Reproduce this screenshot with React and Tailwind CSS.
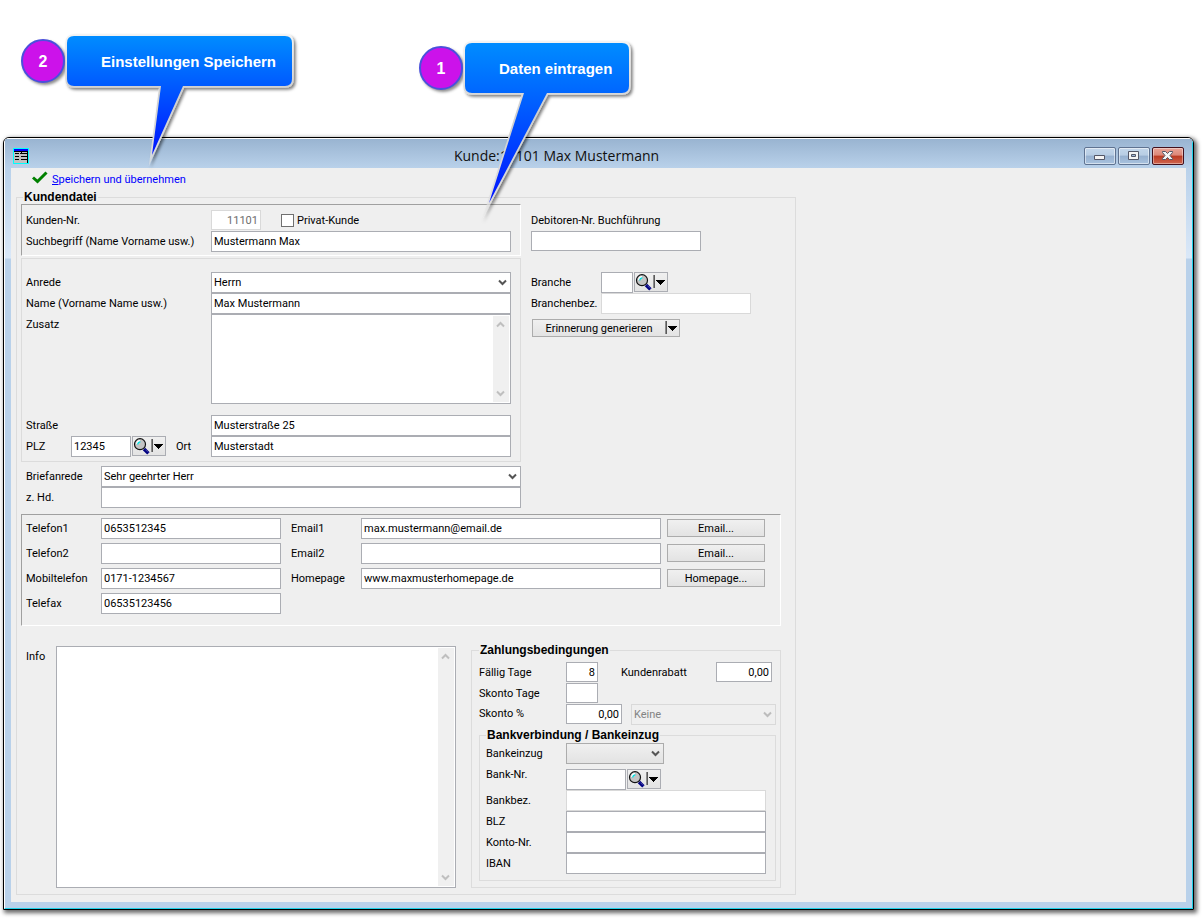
import { useState } from 'react'

const initialCustomer = {
  kundenNr: '11101',
  suchbegriff: 'Mustermann Max',
  debitorenNr: '',
  anrede: 'Herrn',
  name: 'Max Mustermann',
  zusatz: '',
  strasse: 'Musterstraße 25',
  plz: '12345',
  ort: 'Musterstadt',
  branche: '',
  branchenbez: '',
  briefanrede: 'Sehr geehrter Herr',
  zHd: '',
  telefon1: '0653512345',
  telefon2: '',
  mobil: '0171-1234567',
  telefax: '06535123456',
  email1: 'max.mustermann@email.de',
  email2: '',
  homepage: 'www.maxmusterhomepage.de',
  info: '',
  faelligTage: '8',
  kundenrabatt: '0,00',
  skontoTage: '',
  skontoProzent: '0,00',
  skontoArt: 'Keine',
  bankeinzug: '',
  bankNr: '',
  bankbez: '',
  blz: '',
  kontoNr: '',
  iban: '',
}

const callouts = [
  {
    number: '2',
    text: 'Einstellungen Speichern',
    box: 'left-[21px] top-[36px] w-[274px]',
    width: 225,
    tail: { left: 94, right: 116, tipX: 85, tipY: 119 },
  },
  {
    number: '1',
    text: 'Daten eintragen',
    box: 'left-[419px] top-[43px] w-[213px]',
    width: 164,
    tail: { left: 59, right: 82, tipX: 24, tipY: 160 },
  },
]

function Callout({ number, text, box, width, tail }) {
  const id = `callout-${number}`
  const outline = `M7 0 H${width - 7} Q${width} 0 ${width} 7 V43 Q${width} 50 ${width - 7} 50 H${tail.right} L${tail.tipX} ${tail.tipY} L${tail.left} 50 H7 Q0 50 0 43 V7 Q0 0 7 0 Z`

  return (
    <div className={`pointer-events-none absolute z-10 flex font-['Liberation_Sans',Arial,sans-serif] ${box}`}>
      <div className="mt-[3px] flex size-11 shrink-0 items-center justify-center rounded-full border-2 border-[#4a50dc] bg-[#cc12ea] text-[16px] font-bold text-white shadow-[2px_2px_3px_rgba(0,0,0,0.45)]">
        {number}
      </div>
      <div className="relative ml-[2px] flex h-[51px] flex-1 items-center">
        <svg className="absolute left-0 top-0 overflow-visible" width={width} height="50" aria-hidden="true">
          <defs>
            <linearGradient id={id} gradientUnits="userSpaceOnUse" x1="0" y1="0" x2="0" y2={tail.tipY}>
              <stop offset="0" stopColor="#008cff" />
              <stop offset="1" stopColor="#0014ff" />
            </linearGradient>
            <linearGradient id={`${id}-edge`} gradientUnits="userSpaceOnUse" x1="0" y1="0" x2="0" y2={tail.tipY + 14}>
              <stop offset="0" stopColor="#f2f2f2" />
              <stop offset="0.4" stopColor="#cfcfcf" />
              <stop offset="0.85" stopColor="#dcdcdc" />
              <stop offset="1" stopColor="#e8e8e8" stopOpacity="0.4" />
            </linearGradient>
            <filter id={`${id}-shadow`} x="-20%" y="-20%" width="140%" height="160%">
              <feDropShadow dx="2" dy="2" stdDeviation="1.5" floodColor="#000" floodOpacity="0.5" />
            </filter>
          </defs>
          <path
            d={outline}
            fill="#cfcfcf"
            stroke={`url(#${id}-edge)`}
            strokeWidth="3.4"
            strokeMiterlimit="30"
            filter={`url(#${id}-shadow)`}
          />
          <path d={outline} fill={`url(#${id})`} />
        </svg>
        <span className="relative pl-[34px] text-[15px] font-bold whitespace-nowrap text-white">{text}</span>
      </div>
    </div>
  )
}

function Label({ htmlFor, className = '', children }) {
  return (
    <label htmlFor={htmlFor} className={`shrink-0 whitespace-nowrap ${className}`}>
      {children}
    </label>
  )
}

function TextField({ id, form, muted = false, right = false, className = '' }) {
  return (
    <input
      id={id}
      type="text"
      value={form.values[id]}
      onChange={form.handleChange}
      readOnly={muted}
      className={`min-w-0 border bg-white outline-none ${muted ? 'border-[#d9d9d9] text-[#6d6d6d]' : 'border-[#abadb3]'} ${
        right ? 'pr-[2px] text-right' : 'px-[2px]'
      } ${className}`}
    />
  )
}

function Chevron({ className = '', up = false }) {
  return (
    <svg viewBox="0 0 9 7" width="9" height="7" className={className} aria-hidden="true">
      <path d={up ? 'M1 5.5 L4.5 2 L8 5.5' : 'M1 1.5 L4.5 5 L8 1.5'} fill="none" stroke="currentColor" strokeWidth="2" />
    </svg>
  )
}

function SelectField({ id, form, look = 'border-[#abadb3] bg-white', disabled = false, className = '' }) {
  return (
    <div className={`relative h-[21px] ${className}`}>
      <select
        id={id}
        value={form.values[id]}
        onChange={form.handleChange}
        disabled={disabled}
        className={`block h-full w-full appearance-none border px-[2px] opacity-100 outline-none ${look}`}
      >
        <option>{form.values[id]}</option>
      </select>
      <Chevron
        className={`pointer-events-none absolute right-[4px] top-[7px] ${disabled ? 'text-[#bcbcbc]' : 'text-[#555555]'}`}
      />
    </div>
  )
}

function MemoField({ id, form, className = '' }) {
  return (
    <div className={`flex border border-[#abadb3] bg-white p-px ${className}`}>
      <textarea
        id={id}
        value={form.values[id]}
        onChange={form.handleChange}
        className="min-w-0 flex-1 resize-none overflow-hidden px-px outline-none"
      />
      <div className="flex w-4 flex-col items-start justify-between bg-[#f0f0f0] py-[5px] pl-[3px] text-[#bfbfbf]">
        <Chevron up />
        <Chevron />
      </div>
    </div>
  )
}

function DropArrow() {
  return (
    <svg viewBox="0 0 14 14" width="14" height="14" className="shrink-0" shapeRendering="crispEdges" aria-hidden="true">
      <path d="M0 0 H1 V13 H0 Z" fill="#8c8c8c" />
      <path d="M1 0 H2 V13 H1 Z" fill="#5a5a5a" />
      <path d="M3 5 H12 V6 H11 V7 H10 V8 H9 V9 H8 V10 H7 V9 H6 V8 H5 V7 H4 V6 H3 Z" fill="#000" />
    </svg>
  )
}

function SearchButton({ label }) {
  return (
    <button
      type="button"
      aria-label={label}
      className="ml-px flex h-5 w-[34px] shrink-0 items-center gap-px self-start border border-[#abadb3] bg-linear-to-b from-[#f0f0f0] to-[#e3e3e3]"
    >
      <svg viewBox="0 0 17 18" width="17" height="18" className="shrink-0" aria-hidden="true">
        <path d="M11 12 L15.4 16.4" stroke="#000080" strokeWidth="3.4" />
        <path d="M11.4 11.6 L15.8 16" stroke="#8080d0" strokeWidth="0.8" strokeDasharray="1 1" />
        <circle cx="7" cy="7.2" r="5.5" fill="#c4c4c4" stroke="#111" strokeWidth="1.2" />
        <path d="M3.8 7 A3.4 3.4 0 0 1 7 3.8" fill="none" stroke="#fff" strokeWidth="1.4" />
        <path d="M4.8 7.4 A2.6 2.6 0 0 1 7.4 4.8" fill="none" stroke="#00e5e5" strokeWidth="1.3" />
      </svg>
      <DropArrow />
    </button>
  )
}

function ActionButton({ className = '', children }) {
  return (
    <button
      type="button"
      className={`flex h-[18px] items-center justify-center border border-[#acacac] bg-linear-to-b from-[#f0f0f0] to-[#e3e3e3] ${className}`}
    >
      {children}
    </button>
  )
}

function TitleBar() {
  const buttonClass =
    'flex h-[18px] w-8 items-center justify-center rounded-[2px] border border-[#5f7391] bg-[linear-gradient(#c3d6ea_0%,#b7cde4_45%,#96b0cf_50%,#a9c3df_100%)] shadow-[inset_0_0_0_1px_rgba(255,255,255,0.5)]'

  return (
    <header className="flex h-[29px] items-center bg-linear-to-b from-[#99b4d1] to-[#b9d1ea] px-2 pt-[5px]">
      <svg viewBox="0 0 16 16" width="16" height="16" shapeRendering="crispEdges" aria-hidden="true">
        <path d="M0 0 H16 V16 H0 Z" fill="#00ffff" />
        <path d="M1 1 H15 V15 H1 Z" fill="#c0c0c0" />
        <path d="M1 1 H15 V3 H1 Z" fill="#0000ff" />
        <path d="M1 3 H15 V4 H1 Z M2 5 H6 V6 H2 Z M8 4 H9 V5 H14 V6 H7 V5 H8 Z M2 8 H6 V9 H2 Z M8 8 H14 V9 H8 Z M2 11 H6 V12 H2 Z M8 11 H14 V12 H8 Z M14 4 H15 V15 H14 Z" fill="#000" />
      </svg>
      <h1 className="flex-1 text-center font-['Open_Sans',sans-serif] text-[14px] leading-[20px] text-[#111]">
        Kunde:11101 Max Mustermann
      </h1>
      <div className="flex gap-[2px]">
        <button type="button" aria-label="Minimieren" className={buttonClass}>
          <svg viewBox="0 0 12 6" width="12" height="6" className="mt-1" aria-hidden="true">
            <path d="M0.5 0.5 H10.5 V4.5 H0.5 Z" fill="#f4f4f4" stroke="#535666" />
          </svg>
        </button>
        <button type="button" aria-label="Maximieren" className={buttonClass}>
          <svg viewBox="0 0 12 10" width="12" height="10" aria-hidden="true">
            <path d="M0.5 0.5 H10.5 V8.5 H0.5 Z" fill="#f4f4f4" stroke="#535666" />
            <path d="M3.5 3.5 H7.5 V5.5 H3.5 Z" fill="#9fb8d6" stroke="#535666" />
          </svg>
        </button>
        <button
          type="button"
          aria-label="Schließen"
          className="flex h-[18px] w-8 items-center justify-center rounded-[2px] border border-[#43101c] bg-[linear-gradient(#e8a498_0%,#dc8778_45%,#bb3a22_50%,#cf6650_100%)] shadow-[inset_0_0_0_1px_rgba(255,255,255,0.4)]"
        >
          <svg viewBox="0 0 12 10" width="12" height="10" aria-hidden="true">
            <path
              d="M0.5 0.5 H3.5 L5.5 2.5 L7.5 0.5 H10.5 V1.5 L8 4.5 L10.5 7.5 V8.5 H7.5 L5.5 6.5 L3.5 8.5 H0.5 V7.5 L3 4.5 L0.5 1.5 Z"
              fill="#f4f4f4"
              stroke="#535666"
            />
          </svg>
        </button>
      </div>
    </header>
  )
}

function AddressSection({ form }) {
  return (
    <div className="w-[500px] shrink-0">
      <div className="flex flex-col border border-t-[#a0a0a0] border-r-white border-b-white border-l-[#a0a0a0] pt-[5px] pr-[9px] pb-[3px] pl-1">
        <div className="mb-px flex items-center">
          <Label htmlFor="kundenNr" className="w-[185px]">Kunden-Nr.</Label>
          <TextField id="kundenNr" form={form} muted right className="h-5 w-[50px]" />
          <input
            id="privatKunde"
            type="checkbox"
            className="ml-5 size-[13px] appearance-none border border-[#707070] bg-white checked:bg-[#707070]"
          />
          <Label htmlFor="privatKunde" className="ml-[3px]">Privat-Kunde</Label>
        </div>
        <div className="flex items-center">
          <Label htmlFor="suchbegriff" className="w-[185px]">Suchbegriff (Name Vorname usw.)</Label>
          <TextField id="suchbegriff" form={form} className="h-[21px] flex-1" />
        </div>
      </div>

      <div className="mt-[2px] border border-[#dcdcdc] pt-[13px] pr-[9px] pb-1 pl-1">
        <div className="flex items-center">
          <Label htmlFor="anrede" className="w-[185px]">Anrede</Label>
          <SelectField id="anrede" form={form} className="flex-1" />
        </div>
        <div className="flex items-center">
          <Label htmlFor="name" className="w-[185px]">Name (Vorname Name usw.)</Label>
          <TextField id="name" form={form} className="h-[21px] flex-1" />
        </div>
        <div className="flex">
          <Label htmlFor="zusatz" className="w-[185px] leading-[21px]">Zusatz</Label>
          <MemoField id="zusatz" form={form} className="h-[90px] flex-1" />
        </div>
        <div className="mt-[11px] flex items-center">
          <Label htmlFor="strasse" className="w-[185px]">Straße</Label>
          <TextField id="strasse" form={form} className="h-[21px] flex-1" />
        </div>
        <div className="flex items-center">
          <Label htmlFor="plz" className="w-[45px]">PLZ</Label>
          <TextField id="plz" form={form} className="h-[21px] w-[60px]" />
          <SearchButton label="PLZ suchen" />
          <Label htmlFor="ort" className="w-[45px] pl-[10px]">Ort</Label>
          <TextField id="ort" form={form} className="h-[21px] flex-1" />
        </div>
      </div>
    </div>
  )
}

function AccountSection({ form }) {
  return (
    <div className="min-w-0 flex-1 pt-[6px]">
      <Label htmlFor="debitorenNr" className="block leading-[21px]">Debitoren-Nr. Buchführung</Label>
      <TextField id="debitorenNr" form={form} className="block h-5 w-[170px]" />
      <div className="mt-[21px] flex items-center">
        <Label htmlFor="branche" className="w-[70px]">Branche</Label>
        <TextField id="branche" form={form} className="h-[21px] w-8" />
        <SearchButton label="Branche suchen" />
      </div>
      <div className="flex items-center">
        <Label htmlFor="branchenbez" className="w-[70px]">Branchenbez.</Label>
        <TextField id="branchenbez" form={form} muted className="h-[21px] w-[150px]" />
      </div>
      <ActionButton className="mt-[5px] ml-px w-[148px]">
        <span className="flex-1 text-center">Erinnerung generieren</span>
        <DropArrow />
      </ActionButton>
    </div>
  )
}

const phoneFields = [
  { id: 'telefon1', label: 'Telefon1' },
  { id: 'telefon2', label: 'Telefon2' },
  { id: 'mobil', label: 'Mobiltelefon' },
  { id: 'telefax', label: 'Telefax' },
]

const webFields = [
  { id: 'email1', label: 'Email1', action: 'Email...' },
  { id: 'email2', label: 'Email2', action: 'Email...' },
  { id: 'homepage', label: 'Homepage', action: 'Homepage...' },
]

function ContactSection({ form }) {
  return (
    <div className="mt-[6px] flex gap-[10px] border border-t-[#a0a0a0] border-r-white border-b-white border-l-[#a0a0a0] pt-[3px] pr-[15px] pb-[11px] pl-1">
      <div className="flex flex-col gap-1">
        {phoneFields.map(({ id, label }) => (
          <div key={id} className="flex items-center">
            <Label htmlFor={id} className="w-[75px]">{label}</Label>
            <TextField id={id} form={form} className="h-[21px] w-[180px]" />
          </div>
        ))}
      </div>
      <div className="flex flex-1 flex-col gap-1">
        {webFields.map(({ id, label, action }) => (
          <div key={id} className="flex items-center">
            <Label htmlFor={id} className="w-[70px]">{label}</Label>
            <TextField id={id} form={form} className="h-[21px] flex-1" />
            <ActionButton className="mt-px ml-[6px] w-[98px] self-start">{action}</ActionButton>
          </div>
        ))}
      </div>
    </div>
  )
}

function PaymentSection({ form }) {
  return (
    <fieldset className="w-[310px] shrink-0 border border-[#dcdcdc] pt-[5px] pr-1 pb-[6px] pl-[7px]">
      <legend className="px-px font-['Liberation_Sans',Arial,sans-serif] text-[12px] leading-[14px] font-bold">
        Zahlungsbedingungen
      </legend>
      <div className="flex items-center">
        <Label htmlFor="faelligTage" className="w-[87px]">Fällig Tage</Label>
        <TextField id="faelligTage" form={form} right className="h-5 w-8" />
        <Label htmlFor="kundenrabatt" className="ml-[23px] w-[95px]">Kundenrabatt</Label>
        <TextField id="kundenrabatt" form={form} right className="h-5 w-14" />
      </div>
      <div className="mt-px flex items-center">
        <Label htmlFor="skontoTage" className="w-[87px]">Skonto Tage</Label>
        <TextField id="skontoTage" form={form} right className="h-5 w-8" />
      </div>
      <div className="mt-px flex items-start">
        <Label htmlFor="skontoProzent" className="w-[87px] leading-[20px]">Skonto %</Label>
        <TextField id="skontoProzent" form={form} right className="h-5 w-14" />
        <SelectField
          id="skontoArt"
          form={form}
          disabled
          look="border-[#d9d9d9] bg-[#efefef] text-[#838383]"
          className="ml-[9px] flex-1"
        />
      </div>

      <fieldset className="mt-[3px] border border-[#dcdcdc] pt-px pr-[9px] pb-[6px] pl-[6px]">
        <legend className="px-px font-['Liberation_Sans',Arial,sans-serif] text-[12px] leading-[14px] font-bold">
          Bankverbindung / Bankeinzug
        </legend>
        <div className="flex items-center">
          <Label htmlFor="bankeinzug" className="w-20">Bankeinzug</Label>
          <SelectField
            id="bankeinzug"
            form={form}
            look="border-[#acacac] bg-linear-to-b from-[#f0f0f0] to-[#e3e3e3]"
            className="w-[98px]"
          />
        </div>
        <div className="mt-[5px] flex items-start">
          <Label htmlFor="bankNr" className="w-20 leading-[11px]">Bank-Nr.</Label>
          <TextField id="bankNr" form={form} className="h-[21px] w-[60px]" />
          <SearchButton label="Bank suchen" />
        </div>
        <div className="flex items-center">
          <Label htmlFor="bankbez" className="w-20">Bankbez.</Label>
          <TextField id="bankbez" form={form} muted className="h-[21px] flex-1" />
        </div>
        <div className="flex items-center">
          <Label htmlFor="blz" className="w-20">BLZ</Label>
          <TextField id="blz" form={form} className="h-[21px] flex-1" />
        </div>
        <div className="flex items-center">
          <Label htmlFor="kontoNr" className="w-20">Konto-Nr.</Label>
          <TextField id="kontoNr" form={form} className="h-[21px] flex-1" />
        </div>
        <div className="flex items-center">
          <Label htmlFor="iban" className="w-20">IBAN</Label>
          <TextField id="iban" form={form} className="h-[21px] flex-1" />
        </div>
      </fieldset>
    </fieldset>
  )
}

export default function App() {
  const [values, setValues] = useState(initialCustomer)

  function handleChange(event) {
    const { id, value } = event.target
    setValues((prev) => ({
      ...prev,
      [id]: value,
    }))
  }

  const form = { values, handleChange }
  const edgeClass = 'w-[6px] shrink-0 bg-[linear-gradient(#b9d1ea_0px,#dae8f8_90px,#b9d1ea_91px)]'

  return (
    <div className="relative flex min-h-screen flex-col bg-white pt-[137px] pr-2 pb-2 pl-[3px] font-[Roboto,Arial,sans-serif] text-[11px] leading-[13px] text-black">
      {callouts.map((callout) => (
        <Callout key={callout.number} {...callout} />
      ))}

      <main className="flex flex-1 flex-col overflow-hidden rounded-t-[6px] border border-black shadow-[2px_2px_4px_1px_rgba(0,0,0,0.6)]">
        <div className="flex flex-1 flex-col rounded-t-[5px] border border-t-white border-r-[#1fd0e8] border-b-[#1fd0e8] border-l-white bg-[#b9d1ea]">
          <TitleBar />
          <div className="flex flex-1 pb-[6px]">
            <div className={edgeClass} />
            <form className="min-w-0 flex-1 bg-[#efefef] pl-[5px]" onSubmit={(event) => event.preventDefault()}>
              <div className="flex h-[22px] items-center pl-4">
                <svg viewBox="0 0 16 13" width="16" height="13" className="-mt-1" aria-hidden="true">
                  <path d="M1 6.5 L5.5 10.5 L14.5 1.5" fill="none" stroke="#008000" strokeWidth="3" />
                </svg>
                <a href="#speichern" className="ml-1 text-[#0000ff]">
                  <span className="underline">S</span>peichern und übernehmen
                </a>
              </div>

              <fieldset className="w-full max-w-[780px] border border-[#dcdcdc] pr-[14px] pb-[6px] pl-1">
                <legend className="ml-[2px] px-px font-['Liberation_Sans',Arial,sans-serif] text-[12px] leading-[14px] font-bold">
                  Kundendatei
                </legend>
                <div className="flex gap-[10px]">
                  <AddressSection form={form} />
                  <AccountSection form={form} />
                </div>

                <div className="mt-1 w-[500px] pl-[5px]">
                  <div className="flex items-center">
                    <Label htmlFor="briefanrede" className="w-[75px]">Briefanrede</Label>
                    <SelectField id="briefanrede" form={form} className="flex-1" />
                  </div>
                  <div className="flex items-center">
                    <Label htmlFor="zHd" className="w-[75px]">z. Hd.</Label>
                    <TextField id="zHd" form={form} className="h-[21px] flex-1" />
                  </div>
                </div>

                <ContactSection form={form} />

                <div className="mt-[17px] flex gap-[15px] pl-[5px]">
                  <div className="flex flex-1 pt-[3px]">
                    <Label htmlFor="info" className="w-[30px] leading-[21px]">Info</Label>
                    <MemoField id="info" form={form} className="flex-1" />
                  </div>
                  <PaymentSection form={form} />
                </div>
              </fieldset>
            </form>
            <div className={edgeClass} />
          </div>
        </div>
      </main>
    </div>
  )
}
